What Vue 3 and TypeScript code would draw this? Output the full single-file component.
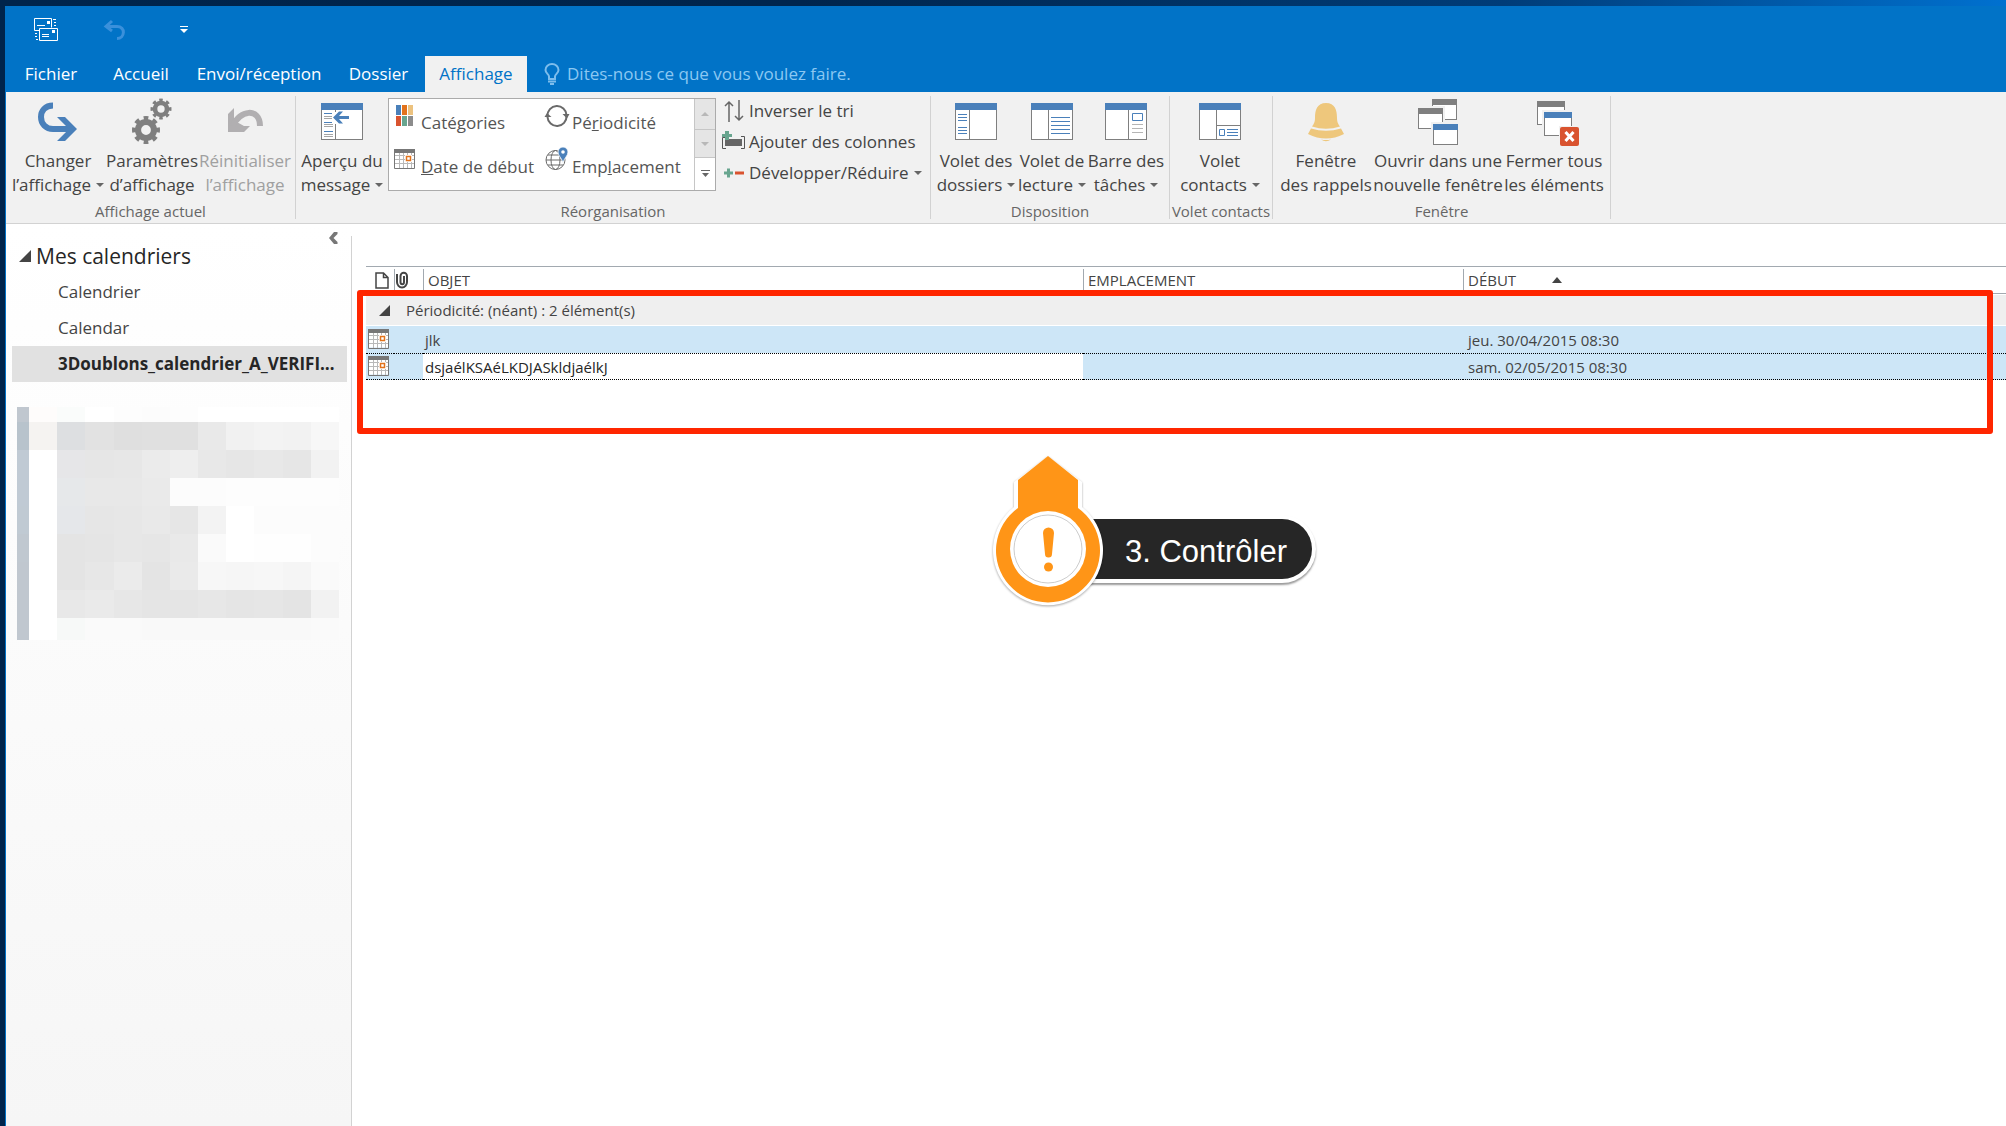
<script setup lang="ts">
import { ref } from 'vue'

interface LargeCommand {
  id: string
  lines: [string, string]
  width: string
  menu?: boolean
  disabled?: boolean
}

interface CalendarRow {
  id: number
  subject: string
  location: string
  start: string
  editing: boolean
}

const tabs = [
  { label: 'Fichier', size: 'w-file' },
  { label: 'Accueil', size: 'w-home' },
  { label: 'Envoi/réception', size: 'w-send' },
  { label: 'Dossier', size: 'w-folder' },
  { label: 'Affichage', size: 'w-view' },
]
const activeTab = ref('Affichage')

const currentView: LargeCommand[] = [
  { id: 'change', lines: ['Changer', 'l’affichage'], width: 'b96', menu: true },
  { id: 'settings', lines: ['Paramètres', 'd’affichage'], width: 'b92' },
  { id: 'reset', lines: ['Réinitialiser', 'l’affichage'], width: 'b94', disabled: true },
]
const preview: LargeCommand = { id: 'preview', lines: ['Aperçu du', 'message'], width: 'b92', menu: true }
const layoutCommands: LargeCommand[] = [
  { id: 'folders', lines: ['Volet des', 'dossiers'], width: 'b82', menu: true },
  { id: 'reading', lines: ['Volet de', 'lecture'], width: 'b70', menu: true },
  { id: 'todo', lines: ['Barre des', 'tâches'], width: 'b78', menu: true },
]
const people: LargeCommand[] = [
  { id: 'people', lines: ['Volet', 'contacts'], width: 'b92', menu: true },
]
const windowCommands: LargeCommand[] = [
  { id: 'reminders', lines: ['Fenêtre', 'des rappels'], width: 'b92' },
  { id: 'newWindow', lines: ['Ouvrir dans une', 'nouvelle fenêtre'], width: 'b132' },
  { id: 'closeAll', lines: ['Fermer tous', 'les éléments'], width: 'b100' },
]
const groups = [
  { label: 'Affichage actuel', cls: 'g-current', commands: currentView },
  { label: 'Réorganisation', cls: 'g-arrange', commands: [preview], arrange: true },
  { label: 'Disposition', cls: 'g-layout', commands: layoutCommands },
  { label: 'Volet contacts', cls: 'g-people', commands: people },
  { label: 'Fenêtre', cls: 'g-window', commands: windowCommands },
]

const arrangements = [
  { id: 'categories', before: 'Caté', key: 'g', after: 'ories' },
  { id: 'recurrence', before: 'Pé', key: 'r', after: 'iodicité' },
  { id: 'startDate', before: '', key: 'D', after: 'ate de début' },
  { id: 'location', before: 'Emp', key: 'l', after: 'acement' },
]
const smallCommands = [
  { id: 'sort', label: 'Inverser le tri' },
  { id: 'columns', label: 'Ajouter des colonnes' },
  { id: 'expand', label: 'Développer/Réduire', menu: true },
]

const pane = '<rect x="3.5" y="5.5" width="41" height="36" fill="#fff" stroke="#7f7f7f"/><rect x="3" y="5" width="42" height="7" fill="#4a80ba"/>'
const miniWindow = (x: number, y: number, w: number, h: number, c: string) =>
  `<rect x="${x - 2}" y="${y - 2}" width="${w + 4}" height="${h + 4}" fill="#f1f1f1"/><rect x="${x + 0.5}" y="${y + 0.5}" width="${w - 1}" height="${h - 1}" fill="#fff" stroke="#7f7f7f"/><rect x="${x}" y="${y}" width="${w}" height="6" fill="${c}"/>`
const gear = (x: number, y: number, r: number) =>
  `<g fill="none" stroke="#7f7f7f"><circle cx="${x}" cy="${y}" r="${r * 0.57}" stroke-width="${r * 0.44}"/><circle cx="${x}" cy="${y}" r="${r * 0.86}" stroke-width="${r * 0.28}" pathLength="16" stroke-dasharray="1 1" stroke-dashoffset="0.5"/></g>`

const icons: Record<string, string> = {
  change: '<path d="M19 7.5C11 7.500 7 13 7 19C7 26 12 31 19 31H37" fill="none" stroke="#4a80ba" stroke-width="6"/><path d="M23 19h8l12 12-12 12h-8l12-12z" fill="#4a80ba"/>',
  settings: gear(33, 11, 10.5) + gear(18, 32, 14),
  reset: '<path d="M7 16l6-6v13h1l9 5h6l-6 6H7z" fill="#b1afb1"/><path d="M12 28C18 12 39 9 39 28" fill="none" stroke="#b1afb1" stroke-width="6"/>',
  preview: pane + '<path d="M17.500 12v29" stroke="#7f7f7f"/><path d="M6 18.500h9M6 20.500h9M6 26.500h9M6 28.500h9M6 36.500h9M6 38.500h9" stroke="#a5a5a5"/><path d="M6 15.500h9M6 24.500h9M6 33.500h9" stroke="#4a80ba"/><path d="M14 14h9v12h-9z" fill="#fff"/><path d="M15 19.500l6-6h4l-4 4.500h10v3H21l4 4.500h-4z" fill="#4a80ba"/>',
  folders: pane + '<path d="M17.500 12v29" stroke="#7f7f7f"/><path d="M6 16.500h9M6 19.500h9M6 22.500h9M6 29.500h9M6 32.500h9M6 35.500h9" stroke="#4a80ba"/>',
  reading: pane + '<path d="M20.500 12v29" stroke="#7f7f7f"/><path d="M23 19.500h19M23 23.500h19M23 27.500h19M23 31.500h19M23 35.500h19" stroke="#4a80ba"/>',
  todo: pane + '<path d="M26.500 12v29" stroke="#7f7f7f"/><path d="M30.500 15.500h10v7h-10z" fill="#fff" stroke="#4a80ba"/><path d="M30 26.500h11M30 30.500h11M30 34.500h11" stroke="#b5b5b5"/>',
  people: pane + '<path d="M20.500 12v29M20 27.500h25" stroke="#7f7f7f"/><path d="M23.500 31.500h5v6h-5zM31 31.500h11M31 34.500h11M31 37.500h11" fill="none" stroke="#4a80ba"/>',
  reminders: '<path d="M24 5C15 5 13 12 13 20C13 25 11 27 10 28.500Q24 33 38 28.500C37 27 35 25 35 20C35 12 33 5 24 5zM9 30.500L6 36Q24 45 42 36L39 30.500Q24 35 9 30.500zM19 41.500Q24 45 29 41.500Q24 42.500 19 41.500z" fill="#eec77c"/>',
  newWindow: miniWindow(18, 1, 25, 21, '#7f7f7f') + miniWindow(4, 10, 25, 21, '#7f7f7f') + miniWindow(19, 26, 25, 21, '#4a80ba'),
  closeAll: miniWindow(7, 3, 28, 24, '#7f7f7f') + miniWindow(14, 14, 28, 24, '#4a80ba') + '<rect x="29" y="28" width="21" height="21" fill="#f1f1f1"/><rect x="30" y="29" width="19" height="19" rx="2" fill="#d9532f"/><path d="M35.500 34l8 9M43.500 34l-8 9" stroke="#fff" stroke-width="3"/>',
  categories: '<path d="M2 1h5v10H2z" fill="#4a80ba"/><path d="M8 1h5v10H8z" fill="#e2731c"/><path d="M14 1h5v10h-5z" fill="#ecc27f"/><path d="M2 12h5v10H2z" fill="#d9532f"/><path d="M8 12h5v10H8z" fill="#68a58f"/><path d="M14 12h5v10h-5z" fill="#8c8c8c"/>',
  recurrence: '<path d="M2.500 12A9.500 9.500 0 0 1 21.500 11M21.500 12A9.500 9.500 0 0 1 2.500 13" fill="none" stroke="#6a6a6a" stroke-width="2"/><path d="M17.500 10h7l-2.500 4.500zM-.5 13L2 9l4.500 4z" fill="#6a6a6a"/>',
  startDate: '<path d="M.5 2.500h20v17H.5z" fill="#fff"/><path d="M5.500 4v16M9.500 4v16M13.500 4v16M17.500 4v16M1 7.500h19M1 11.500h19M1 15.500h19" stroke="#b9b9b9"/><path d="M.5 1.500h20v19H.5z" fill="none" stroke="#777"/><path d="M0 1h21v4H0z" fill="#777"/><path d="M11 7h7v7h-7z" fill="#fff"/><path d="M12.500 8.500h4v4h-4z" fill="#fff" stroke="#e2731c" stroke-width="1.500"/>',
  location: '<g fill="none" stroke="#6a6a6a"><circle cx="10.500" cy="12" r="9.500"/><ellipse cx="10.500" cy="12" rx="4.500" ry="9.500"/><path d="M1 12h19M3 7h15M3 17h15"/></g><path d="M13 4a5 5 0 1 1 10 0c0 4-4 6-5 11c-1-5-5-7-5-11z" fill="#4a80ba" stroke="#fff" stroke-width=".8"/><circle cx="18" cy="4" r="1.800" fill="#fff"/>',
  sort: '<path d="M7 23V3M3 7l4-4 4 4M17 1v20M13 17l4 4 4-4" fill="none" stroke="#666" stroke-width="1.500"/>',
  columns: '<path d="M4 7.500H.5v11H4M19 6.500h3.500v12H19" fill="none" stroke="#555"/><path d="M3 9h17v7H3z" fill="#666"/><path d="M3 1h4v3h3v3H7v3H3V7H0V4h3z" fill="#68a58f"/>',
  expand: '<path d="M5 7.500h3v3h3v3H8v3H5v-3H2v-3h3z" fill="#68a58f"/><path d="M13 10.500h9v3h-9z" fill="#d9532f"/>',
}

const calendars = ['Calendrier', 'Calendar', '3Doublons_calendrier_A_VERIFI…']
const selectedCalendar = ref('3Doublons_calendrier_A_VERIFI…')

const rows = ref<CalendarRow[]>([
  { id: 1, subject: 'jlk', location: '', start: 'jeu. 30/04/2015 08:30', editing: false },
  { id: 2, subject: 'dsjaélKSAéLKDJASkldjaélkJ', location: '', start: 'sam. 02/05/2015 08:30', editing: true },
])

const mosaic = [
  ['c0c7cf', 'fefcfb', 'fafcfb', 'ffffff', 'fdfdfd', 'fcfcfc', 'fdfdfd', 'ffffff', 'ffffff', 'ffffff', 'ffffff', 'ffffff'],
  ['b8c3cc', 'f5f3f1', 'dddfe1', 'e2e2e2', 'dfdfdf', 'e0e0e0', 'e0e0e0', 'e9e9e9', 'f1f1f1', 'f3f3f3', 'f2f2f2', 'f7f7f7'],
  ['c0cad4', 'ffffff', 'e6e6e8', 'e6e6e6', 'e7e7e7', 'ebebeb', 'eeeeee', 'e8e8e8', 'e6e6e6', 'e8e8e8', 'e6e6e6', 'f2f2f2'],
  ['c0cad4', 'ffffff', 'e6e8ea', 'e8e8e8', 'e8e8e8', 'eaeaea', 'fcfcfc', 'fcfcfc', 'fdfdfd', 'fdfdfd', 'fdfdfd', 'fdfdfd'],
  ['c0cad3', 'ffffff', 'e5e7ea', 'e6e6e6', 'e7e7e7', 'e9e9e9', 'e6e6e6', 'f3f3f3', 'ffffff', 'fcfcfc', 'fcfcfc', 'fcfcfc'],
  ['c0c8d0', 'ffffff', 'e4e4e4', 'e5e5e5', 'e7e7e7', 'e6e6e6', 'e9e9e9', 'fafafa', 'ffffff', 'fefefe', 'fefefe', 'fcfcfc'],
  ['c0c7cf', 'ffffff', 'e4e4e4', 'e7e7e7', 'ebebeb', 'e4e4e4', 'eaeaea', 'f7f7f7', 'f6f6f6', 'f7f7f7', 'f5f5f5', 'fafafa'],
  ['c0c7cf', 'ffffff', 'e8e8e8', 'eaeaea', 'e7e7e7', 'e5e5e5', 'e5e5e5', 'e7e7e7', 'e5e5e5', 'e6e6e6', 'e4e4e4', 'f2f2f2'],
  ['c0c7cf', 'ffffff', 'f7f9f8', 'fafafa', 'fafafa', 'f9f9f9', 'f9f9f9', 'f9f9f9', 'f9f9f9', 'f9f9f9', 'f9f9f9', 'fafafa'],
].flat()
</script>

<template>
  <div class="desktop">
    <div class="window">
      <header class="titlebar">
        <div class="quick">
          <button class="quick-btn send" aria-label="Envoyer/recevoir tous les dossiers">
            <svg width="24" height="24" viewBox="0 0 24 24" fill="none" stroke="#fff">
              <path d="M5 12.500H.5V.5h17v9M5.500 10.500h18v12h-18zM3 7.500h8M8 16.500h7M8 18.500h7M19 1.500h3M20 4.500h2M20 7.500h2M1 15.500h2M1 18.500h2M2 21.500h2" />
              <path d="M13 3h3v3h-3zM18 12h3v3h-3z" fill="#fff" stroke="none" />
            </svg>
          </button>
          <button class="quick-btn undo" aria-label="Annuler" disabled>
            <svg width="22" height="20" viewBox="0 0 22 20" fill="none" stroke="#3a90db" stroke-width="3">
              <path d="M8 1L2 6.500 8 11M2 6.500h11c9 0 8 12 0 12" />
            </svg>
          </button>
          <button class="quick-btn more" aria-label="Personnaliser la barre d’outils Accès rapide">
            <svg width="8" height="8" viewBox="0 0 8 8" fill="#fff"><path d="M0 0h8v1H0zM0 3h8L4 7z" /></svg>
          </button>
        </div>
        <nav class="tabs">
          <button
            v-for="tab in tabs"
            :key="tab.label"
            class="tab"
            :class="[tab.size, { active: activeTab === tab.label }]"
            @click="activeTab = tab.label"
          >{{ tab.label }}</button>
          <label class="tell-me">
            <svg width="16" height="22" viewBox="0 0 16 22" fill="none" stroke="#7dbdec" stroke-width="2">
              <path d="M5 16v-2.500C5 11 1.500 10.500 1.500 7a6.500 6 0 0 1 13 0C14.500 10.500 11 11 11 13.500V16zM4 18.500h8M6 21h4" />
            </svg>
            <input type="text" placeholder="Dites-nous ce que vous voulez faire." />
          </label>
        </nav>
      </header>

      <section class="ribbon">
        <div v-for="group in groups" :key="group.label" class="group" :class="group.cls">
          <div class="group-body">
            <button
              v-for="command in group.commands"
              :key="command.id"
              class="large"
              :class="command.width"
              :disabled="command.disabled"
            >
              <svg class="large-icon" viewBox="0 0 48 48" aria-hidden="true" v-html="icons[command.id]"></svg>
              <span>{{ command.lines[0] }}</span>
              <span>{{ command.lines[1] }}<i v-if="command.menu" class="caret"></i></span>
            </button>
            <template v-if="group.arrange">
              <div class="gallery">
                <div class="gallery-items">
                  <button v-for="item in arrangements" :key="item.id" class="arrangement">
                    <svg class="small-icon" viewBox="0 0 24 24" aria-hidden="true" v-html="icons[item.id]"></svg>
                    <span class="arrangement-label">{{ item.before }}<u>{{ item.key }}</u>{{ item.after }}</span>
                  </button>
                </div>
                <div class="spinner">
                  <button aria-label="Ligne précédente" disabled><svg width="8" height="4" viewBox="0 0 8 4"><path d="M0 4l4-4 4 4z" fill="#b8b8b8" /></svg></button>
                  <button aria-label="Ligne suivante" disabled><svg width="8" height="4" viewBox="0 0 8 4"><path d="M0 0h8L4 4z" fill="#b8b8b8" /></svg></button>
                  <button aria-label="Autres"><svg width="9" height="8" viewBox="0 0 9 8"><path d="M0 0h9v1H0zM1 3h7L4.500 7z" fill="#666" /></svg></button>
                </div>
              </div>
              <div class="small-list">
                <button v-for="item in smallCommands" :key="item.id" class="small">
                  <svg class="small-icon" viewBox="0 0 24 24" aria-hidden="true" v-html="icons[item.id]"></svg>
                  <span>{{ item.label }}<i v-if="item.menu" class="caret"></i></span>
                </button>
              </div>
            </template>
          </div>
          <div class="group-label">{{ group.label }}</div>
        </div>
      </section>

      <div class="workspace">
        <aside class="sidebar">
          <div class="collapse-row">
            <button aria-label="Réduire le volet des dossiers">
              <svg width="9" height="12" viewBox="0 0 9 12"><path d="M5 0h3.500v2L4.500 6l4 4v2H5L0 6z" fill="#777" /></svg>
            </button>
          </div>
          <h2 class="heading">
            <svg width="12" height="12" viewBox="0 0 12 12"><path d="M12 0v12H0z" fill="#444" /></svg>
            Mes calendriers
          </h2>
          <ul class="calendars">
            <li v-for="name in calendars" :key="name">
              <button :class="{ selected: selectedCalendar === name }" @click="selectedCalendar = name">{{ name }}</button>
            </li>
          </ul>
          <div class="mosaic" aria-hidden="true">
            <i v-for="(color, index) in mosaic" :key="index" :style="{ background: '#' + color }"></i>
          </div>
        </aside>

        <main class="content">
          <table>
            <colgroup>
              <col class="c-type" />
              <col class="c-clip" />
              <col class="c-subject" />
              <col class="c-location" />
              <col />
            </colgroup>
            <thead>
              <tr>
                <th aria-label="Type" class="icon-head">
                  <svg width="14" height="17" viewBox="0 0 14 17"><path d="M1 1h7.500L13 5.500V16H1zM8.500 1v4.500H13" fill="#fff" stroke="#444" stroke-width="1.500" /></svg>
                </th>
                <th aria-label="Pièce jointe" class="clip-head">
                  <svg width="12" height="16" viewBox="0 0 12 16"><path d="M1 2v8a4.500 5 0 0 0 10 0V4a3 3 0 0 0-6.500 0v6a1.500 2 0 0 0 3.500 0V4" fill="none" stroke="#444" stroke-width="2" /></svg>
                </th>
                <th>OBJET</th>
                <th>EMPLACEMENT</th>
                <th>DÉBUT<svg class="sort-mark" width="10" height="6" viewBox="0 0 10 6"><path d="M0 6l5-6 5 6z" fill="#444" /></svg></th>
              </tr>
            </thead>
            <tbody>
              <tr class="group-row">
                <td colspan="5">
                  <div>
                    <svg width="11" height="11" viewBox="0 0 12 12"><path d="M12 0v12H0z" fill="#444" /></svg>
                    Périodicité: (néant) : 2 élément(s)
                  </div>
                </td>
              </tr>
              <tr v-for="row in rows" :key="row.id" class="item-row" :class="{ editing: row.editing }">
                <td class="icon-cell"><svg width="24" height="24" viewBox="0 0 24 24" v-html="icons.startDate"></svg></td>
                <td></td>
                <td>
                  <input v-if="row.editing" v-model="row.subject" type="text" aria-label="Objet" />
                  <template v-else>{{ row.subject }}</template>
                </td>
                <td>{{ row.location }}</td>
                <td class="start">{{ row.start }}</td>
              </tr>
            </tbody>
          </table>
          <div class="highlight"></div>
          <div class="callout">
            <svg class="marker" width="116" height="154" viewBox="0 0 116 154">
              <path class="halo" d="M57 2L91 28V53A55 55 0 1 1 23 53V28z" fill="#fff" />
              <path d="M57 2L87 26V54A52 52 0 1 1 27 54V26z" fill="#ff9517" />
              <circle cx="57" cy="95" r="38" fill="#fff" />
              <circle cx="57" cy="95" r="34" fill="#fff" stroke="#ccc" stroke-width="1" />
              <path d="M52 79a5.500 5.500 0 0 1 11 0l-2 21a3.500 3.500 0 0 1-7 0z" fill="#ff9517" />
              <circle cx="57.500" cy="113" r="4.500" fill="#ff9517" />
            </svg>
            <div class="pill">3. Contrôler</div>
          </div>
        </main>
      </div>
    </div>
  </div>
</template>

<style>
body {
  margin: 0;
  background: #001c3d;
}
</style>

<style scoped>
* {
  box-sizing: border-box;
}
.desktop {
  min-height: 100vh;
  display: flex;
  padding: 6px 0 0 5px;
  background: linear-gradient(90deg, #00244b 0%, #00254d 40%, #003c78 75%, #0071d0 100%);
  font-family: "Segoe UI", "Open Sans", "Noto Sans", sans-serif;
  font-size: 17px;
  line-height: 24px;
  color: #444;
}
button,
input {
  font: inherit;
  color: inherit;
  border: 0;
  padding: 0;
  margin: 0;
  background: none;
}
svg {
  flex: none;
  overflow: visible;
}
.window {
  flex: 1;
  min-width: 0;
  display: flex;
  flex-direction: column;
  border-left: 1px solid #0173c7;
  background: #fff;
}
.titlebar {
  background: #0173c7;
  color: #fff;
}
.quick {
  height: 50px;
  display: flex;
  align-items: center;
  padding: 0 0 2px 28px;
}
.quick-btn {
  display: flex;
}
.undo {
  margin-left: 46px;
}
.more {
  margin-left: 54px;
}
.tabs {
  display: flex;
  height: 36px;
}
.tab {
  white-space: nowrap;
}
.tab.active {
  background: #f1f1f1;
  color: #0173c7;
}
.w-file,
.w-home {
  width: 90px;
}
.w-send {
  width: 146px;
}
.w-folder {
  width: 93px;
}
.w-view {
  width: 102px;
}
.tell-me {
  display: flex;
  align-items: center;
  gap: 7px;
  margin-left: 17px;
}
.tell-me input {
  width: 320px;
  outline: none;
}
.tell-me input::placeholder {
  color: #8cc8f2;
  opacity: 1;
}
.ribbon {
  display: flex;
  height: 132px;
  padding-top: 4px;
  background: #f1f1f1;
  border-bottom: 1px solid #d2d2d2;
}
.group {
  height: 123px;
  border-right: 1px solid #d2d2d2;
}
.g-current { width: 290px; }
.g-arrange { width: 635px; }
.g-layout { width: 239px; }
.g-people { width: 103px; }
.g-window { width: 338px; }
.group-body {
  display: flex;
  height: 105px;
  padding-left: 4px;
}
.g-arrange .group-body {
  padding-left: 0;
}
.g-window .group-body {
  padding-left: 7px;
}
.group-label {
  font-size: 15px;
  line-height: 20px;
  text-align: center;
  white-space: nowrap;
  color: #666;
}
.large {
  flex: none;
  display: flex;
  flex-direction: column;
  align-items: center;
  justify-content: flex-start;
  padding-top: 2px;
  white-space: nowrap;
}
.large:disabled {
  color: #a0a0a0;
}
.b70 { width: 70px; }
.b78 { width: 78px; }
.b82 { width: 82px; }
.b92 { width: 92px; }
.b94 { width: 94px; }
.b96 { width: 96px; }
.b100 { width: 100px; }
.b132 { width: 132px; }
.large-icon {
  width: 48px;
  height: 48px;
  margin-bottom: 3px;
}
.caret {
  display: inline-block;
  margin-left: 5px;
  vertical-align: 4px;
  border: 4px solid transparent;
  border-top-color: #666;
  border-bottom-width: 0;
}
.gallery {
  display: flex;
  width: 328px;
  height: 93px;
  margin-top: 2px;
  border: 1px solid #ababab;
  background: #fff;
}
.gallery-items {
  flex: 1;
  display: grid;
  grid-template-columns: 151px 1fr;
  grid-template-rows: 44px 44px;
  padding-left: 5px;
  color: #555;
}
.arrangement {
  display: flex;
  align-items: flex-start;
  gap: 3px;
  padding-top: 5px;
  white-space: nowrap;
}
.arrangement-label {
  padding-top: 7px;
}
.small-icon {
  width: 24px;
  height: 24px;
}
.spinner {
  width: 21px;
  display: grid;
  grid-template-rows: 31px 28px 1fr;
  border-left: 1px solid #c6c6c6;
}
.spinner button {
  display: flex;
  align-items: center;
  justify-content: center;
}
.spinner button:disabled {
  background: #e5e5e5;
  border-bottom: 1px solid #c6c6c6;
}
.small-list {
  display: flex;
  flex-direction: column;
  padding-left: 6px;
}
.small {
  display: flex;
  align-items: center;
  gap: 3px;
  height: 31px;
  padding-bottom: 2px;
  white-space: nowrap;
}
.workspace {
  flex: 1;
  display: flex;
}
.sidebar {
  width: 346px;
  padding: 8px 5px 0 6px;
  background: linear-gradient(#fff, #f6f6f6);
}
.collapse-row {
  display: flex;
  justify-content: flex-end;
  padding-right: 9px;
}
.collapse-row button {
  display: flex;
}
.heading {
  display: flex;
  align-items: center;
  gap: 5px;
  height: 24px;
  margin: 0 0 6px;
  padding-left: 7px;
  font-size: 21px;
  font-weight: 400;
  color: #262626;
  white-space: nowrap;
}
.calendars {
  margin: 0 0 25px;
  padding: 0;
  list-style: none;
}
.calendars button {
  width: 100%;
  height: 36px;
  padding-left: 46px;
  text-align: left;
  white-space: nowrap;
}
.calendars .selected {
  background: #e1e1e1;
  font-weight: 700;
  color: #262626;
}
.mosaic {
  display: grid;
  grid-template-columns: 12px repeat(11, 1fr);
  grid-template-rows: 15px repeat(7, 28px) 22px;
  margin: 0 8px 0 5px;
}
.content {
  flex: 1;
  min-width: 0;
  position: relative;
  padding: 42px 0 0 14px;
}
.content::before {
  content: "";
  position: absolute;
  top: 12px;
  bottom: 0;
  left: -1px;
  border-left: 1px solid #d2d2d2;
}
table {
  width: 100%;
  table-layout: fixed;
  border-collapse: separate;
  border-spacing: 0;
  border-top: 1px solid #a2a9b0;
  font-size: 15px;
  line-height: 20px;
}
.c-type { width: 28px; }
.c-clip { width: 29px; }
.c-subject { width: 660px; }
.c-location { width: 380px; }
th {
  height: 27px;
  padding: 0 0 0 5px;
  text-align: left;
  font-weight: 400;
  white-space: nowrap;
  border-bottom: 1px solid #a2a9b0;
  background: linear-gradient(#a2a9b0, #a2a9b0) 0 2px / 1px 100% no-repeat;
}
th svg {
  display: block;
}
.icon-head {
  padding-left: 9px;
  background: none;
}
.clip-head {
  padding-left: 2px;
}
th .sort-mark {
  display: inline-block;
  margin-left: 36px;
  vertical-align: 3px;
}
td {
  padding: 0 0 0 2px;
  white-space: nowrap;
}
.group-row td {
  height: 32px;
  padding: 0;
  background: #efefef;
  border-top: 1px solid #fff;
  border-bottom: 1px solid #fff;
}
.group-row div {
  display: flex;
  align-items: center;
  gap: 16px;
  padding-left: 13px;
}
.item-row td {
  height: 27px;
  background: #cde6f7;
}
.editing td {
  border-top: 1px dotted #000;
  border-bottom: 1px dotted #000;
}
.item-row .start {
  padding-left: 5px;
}
.icon-cell svg {
  display: block;
}
.editing td:nth-child(3) {
  padding: 0;
  background: #fff;
}
.editing input {
  display: block;
  width: 100%;
  height: 25px;
  padding-left: 2px;
  outline: none;
  color: #262626;
}
.highlight {
  position: absolute;
  top: 66px;
  left: 5px;
  right: 13px;
  height: 144px;
  border: 6px solid #ff2600;
  border-radius: 3px;
  pointer-events: none;
}
.callout {
  position: absolute;
  top: 230px;
  left: 639px;
  display: flex;
  align-items: flex-start;
}
.marker {
  position: relative;
  z-index: 1;
}
.halo {
  filter: drop-shadow(0 1px 1px rgba(0, 0, 0, 0.35));
}
.pill {
  height: 68px;
  margin: 61px 0 0 -57px;
  padding: 3px 25px 0 75px;
  border: 4px solid #fff;
  border-left: 0;
  border-radius: 0 34px 34px 0;
  background: #262626;
  box-shadow: 0 2px 2px rgba(0, 0, 0, 0.4);
  font: 31px/60px "Liberation Sans", Arial, sans-serif;
  color: #fff;
  white-space: nowrap;
}
</style>
